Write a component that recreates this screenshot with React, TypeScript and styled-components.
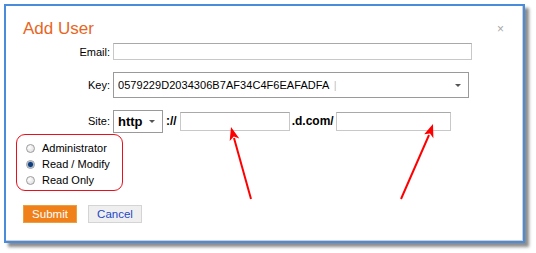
import React, { useState } from "react";
import styled, { createGlobalStyle } from "styled-components";

const GlobalStyle = createGlobalStyle`
  html, body {
    margin: 0;
    padding: 0;
    background: #ffffff;
  }
  body {
    font-family: "Liberation Sans", Arial, sans-serif;
    font-size: 11px;
    color: #000;
  }
`;

const Page = styled.div`
  position: relative;
  width: 536px;
  height: 253px;
  padding: 4px 0 0 4px;
  box-sizing: border-box;
`;

const Dialog = styled.div`
  width: 521px;
  height: 239px;
  box-sizing: border-box;
  border: 2px solid #4a8bdc;
  background: #fff;
  box-shadow: 4px 4px 3px rgba(0, 0, 0, 0.45), inset -1px -1px 0 #cfcfcf;
  display: flex;
  flex-direction: column;
`;

const Header = styled.div`
  display: flex;
  justify-content: space-between;
  align-items: flex-start;
  padding: 13px 19px 0 17px;
`;

const Title = styled.h2`
  margin: 0;
  font-size: 17px;
  line-height: 20px;
  font-weight: normal;
  color: #e8651e;
`;

const Close = styled.span`
  font-size: 12px;
  line-height: 12px;
  margin-top: 4px;
  color: #a8a8a8;
`;

const FormGrid = styled.div`
  display: grid;
  grid-template-columns: 104px auto;
  grid-template-rows: 17px 26px 22px;
  column-gap: 3px;
  row-gap: 12px;
  margin-top: 4px;
  align-items: center;
`;

const Label = styled.label`
  text-align: right;
  font-size: 11px;
`;

const TextBox = styled.div<{ $w: number; $h?: number }>`
  width: ${(p) => p.$w}px;
  height: ${(p) => p.$h ?? 17}px;
  box-sizing: border-box;
  border: 1px solid #c8c8c8;
  border-top-color: #a9a9a9;
  background: #fff;
`;

const Select = styled.div<{ $w: number; $h: number }>`
  width: ${(p) => p.$w}px;
  height: ${(p) => p.$h}px;
  box-sizing: border-box;
  border: 1px solid #9a9a9a;
  background: #fff;
  display: flex;
  align-items: center;
  justify-content: space-between;
  padding: 0 7px 0 4px;
`;

const KeyText = styled.span`
  font-size: 11px;
  letter-spacing: 0.05px;
`;

const Caret = styled.span`
  color: #c0c0c0;
  margin-left: 2px;
`;

const Arrow = styled.span`
  width: 0;
  height: 0;
  border-left: 3px solid transparent;
  border-right: 3px solid transparent;
  border-top: 3px solid #555;
`;

const SiteRow = styled.div`
  display: flex;
  align-items: center;
`;

const Proto = styled.span`
  font-size: 13px;
  font-weight: bold;
`;

const Sep = styled.span<{ $mx: number }>`
  font-size: 12px;
  font-weight: bold;
  margin: 0 ${(p) => p.$mx}px;
`;

const RoleBox = styled.div`
  margin: 2px 0 0 10px;
  width: 107px;
  height: 57px;
  box-sizing: border-box;
  border: 1.5px solid #e8101c;
  border-radius: 9px;
  padding: 5px 0 0 9px;
`;

const RoleRow = styled.div`
  display: flex;
  align-items: center;
  height: 16px;
  gap: 7px;
  cursor: pointer;
`;

const Radio = styled.span<{ $on: boolean }>`
  width: 9px;
  height: 9px;
  border-radius: 50%;
  box-sizing: border-box;
  border: 1px solid #9c9c9c;
  background: ${(p) =>
    p.$on
      ? "radial-gradient(circle, #123c7a 0 2px, #4f7fb8 2.6px, #e8e8e8 3.4px)"
      : "radial-gradient(circle at 35% 35%, #ffffff 0, #e4e4e4 70%, #cfcfcf 100%)"};
`;

const Buttons = styled.div`
  display: flex;
  gap: 11px;
  margin: 14px 0 0 17px;
`;

const Button = styled.button<{ $primary?: boolean }>`
  width: 54px;
  height: 18px;
  padding: 0;
  font-family: "Liberation Sans", Arial, sans-serif;
  font-size: 11.5px;
  border: 1px solid ${(p) => (p.$primary ? "#e8a040" : "#d4d4d4")};
  background: ${(p) => (p.$primary ? "#f08019" : "#efefef")};
  color: ${(p) => (p.$primary ? "#fff" : "#2346c8")};
`;

const Annotations = styled.svg`
  position: absolute;
  left: 0;
  top: 0;
  pointer-events: none;
`;

const roles = ["Administrator", "Read / Modify", "Read Only"];

export default function App() {
  const [role, setRole] = useState(1);

  return (
    <Page>
      <GlobalStyle />
      <Dialog>
        <Header>
          <Title>Add User</Title>
          <Close>×</Close>
        </Header>
        <FormGrid>
          <Label>Email:</Label>
          <TextBox $w={359} />
          <Label>Key:</Label>
          <Select $w={356} $h={26}>
            <KeyText>
              0579229D2034306B7AF34C4F6EAFADFA <Caret>|</Caret>
            </KeyText>
            <Arrow />
          </Select>
          <Label>Site:</Label>
          <SiteRow>
            <Select $w={50} $h={23}>
              <Proto>http</Proto>
              <Arrow />
            </Select>
            <Sep $mx={3}>://</Sep>
            <TextBox $w={110} $h={19} />
            <Sep $mx={2}>.d.com/</Sep>
            <TextBox $w={115} $h={19} />
          </SiteRow>
        </FormGrid>
        <RoleBox>
          {roles.map((r, i) => (
            <RoleRow key={r} onClick={() => setRole(i)}>
              <Radio $on={role === i} />
              {r}
            </RoleRow>
          ))}
        </RoleBox>
        <Buttons>
          <Button $primary>Submit</Button>
          <Button>Cancel</Button>
        </Buttons>
      </Dialog>
      <Annotations width="536" height="253">
        <line x1="251" y1="199" x2="234" y2="138" stroke="#f00" strokeWidth="2" />
        <polygon points="231,127 239.3,138.6 233.8,136.6 229.7,141" fill="#f00" />
        <line x1="401" y1="199" x2="429" y2="135" stroke="#f00" strokeWidth="2" />
        <polygon points="433,124 433.4,138.3 430,133.6 424.2,134.2" fill="#f00" />
      </Annotations>
    </Page>
  );
}
